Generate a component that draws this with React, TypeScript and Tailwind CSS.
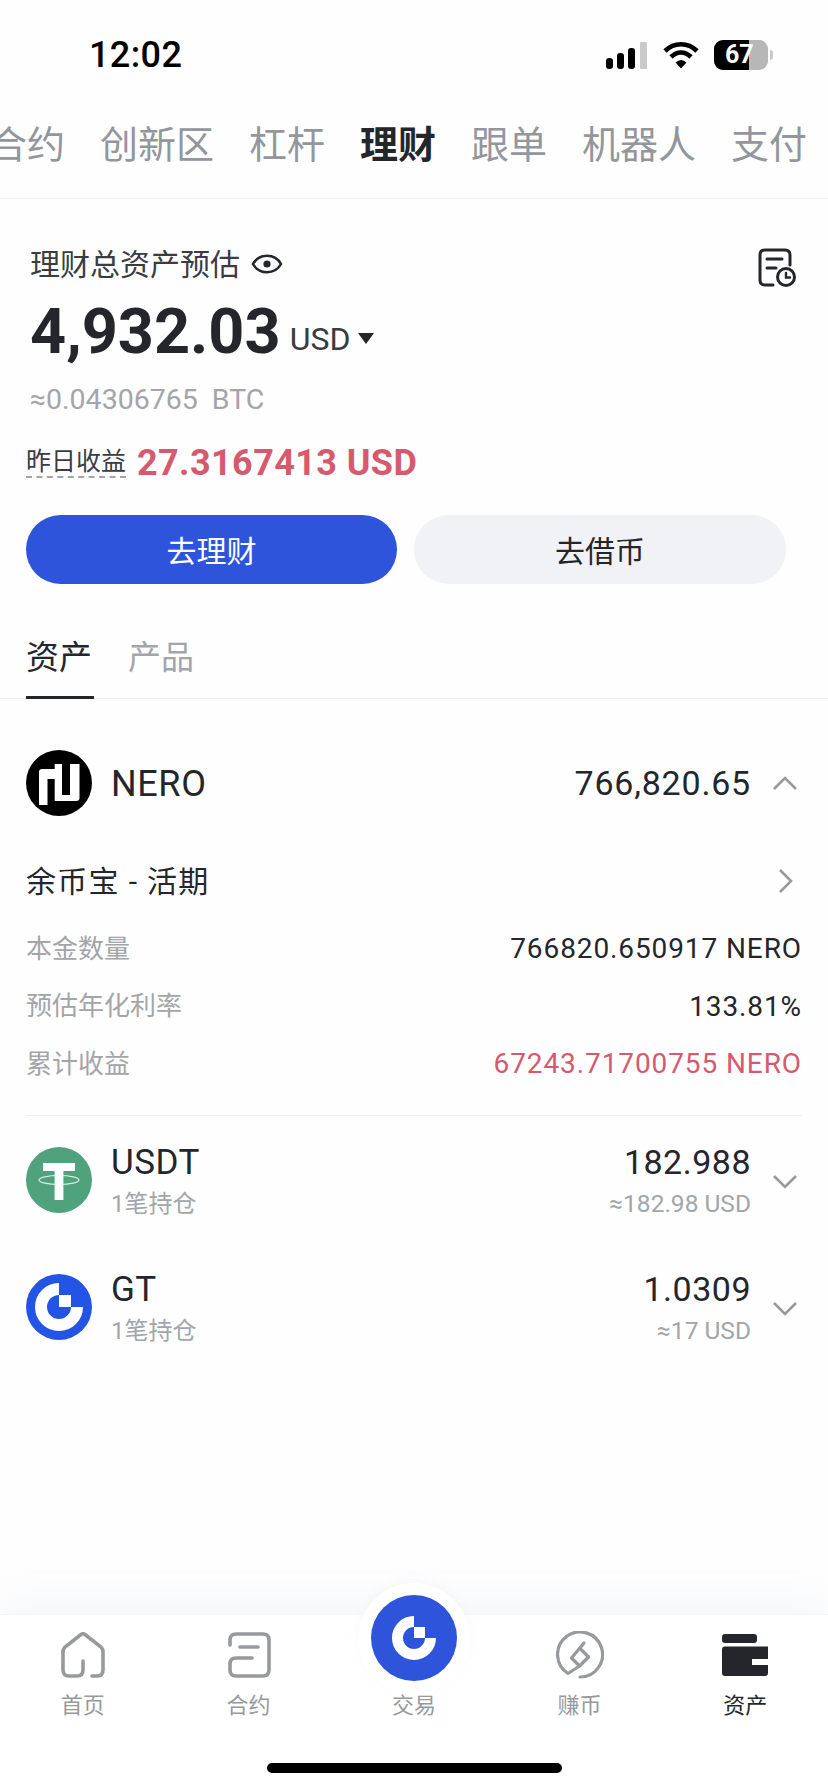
const tabs = ['合约', '创新区', '杠杆', '理财', '跟单', '机器人', '支付'];

const NeroLogo = () => (
  <svg width="66" height="66" viewBox="0 0 66 66" className="shrink-0">
    <circle cx="33" cy="33" r="33" fill="#000" />
    <path
      d="M13 22 Q13 19 16 19 H28.7 V14 H36 V45 H44 V14 H53.5 V48 Q53.5 51 50 51 H28.7 V29 H21.5 V55 H13 Z"
      fill="#fff"
    />
  </svg>
);

const UsdtLogo = () => (
  <svg width="66" height="66" viewBox="0 0 66 66" className="shrink-0">
    <circle cx="33" cy="33" r="33" fill="#50a27d" />
    <path d="M17 16 H49 V24 H37.4 V53 H28.6 V24 H17 Z" fill="#fff" />
    <ellipse cx="33" cy="33" rx="20" ry="4.5" fill="none" stroke="#fff" strokeWidth="1.2" opacity="0.8" />
  </svg>
);

const GateMark = ({ size }: { size: number }) => (
  <svg width={size} height={size} viewBox="0 0 72 72">
    <path d="M36 9 A27 27 0 1 0 63 36" fill="none" stroke="#fff" strokeWidth="18" />
    <rect x="36" y="18" width="18" height="18" fill="#fff" />
  </svg>
);

const ChevronV = ({ up }: { up?: boolean }) => (
  <svg className="ml-[21px] mr-[4px] shrink-0" width="26" height="16" viewBox="0 0 26 16" fill="none" stroke="#97999c" strokeWidth="2.6">
    <path d={up ? 'M2 14 L13 3 L24 14' : 'M2 2 L13 13 L24 2'} />
  </svg>
);

const Row = ({ label, value, red }: { label: string; value: string; red?: boolean }) => (
  <div className="flex h-10 items-center justify-between">
    <span className="pt-[2px] text-[26px] text-[#a3a5a9]">{label}</span>
    <span className={`pt-[2px] text-[28px] tracking-[0.9px] ${red ? 'text-[#d65a6e]' : 'text-[#24262c]'}`}>{value}</span>
  </div>
);

const Coin = ({ logo, name, amount, approx }: { logo: React.ReactNode; name: string; amount: string; approx: string }) => (
  <div className="flex h-20 items-center">
    <div className="mb-[4px] shrink-0">{logo}</div>
    <div className="ml-[19px]">
      <div className="h-10 pt-px text-[35px] leading-10 tracking-[0.5px] text-[#24262c]">{name}</div>
      <div className="mt-1 h-9 text-[24px] leading-9 text-[#a3a5a9]">1笔持仓</div>
    </div>
    <div className="ml-auto text-right">
      <div className="h-10 text-[34px] leading-10 tracking-[0.5px] text-[#24262c]">{amount}</div>
      <div className="mt-1 h-9 text-[24.5px] leading-9 text-[#a3a5a9]">{approx}</div>
    </div>
    <ChevronV />
  </div>
);

const NavItem = ({ icon, label, active }: { icon: React.ReactNode; label: string; active?: boolean }) => (
  <div className="flex flex-col items-center">
    <div className="relative flex h-[50px] w-full items-center justify-center">{icon}</div>
    <div className={`mt-[11px] h-[30px] text-[22px] leading-[30px] ${active ? 'text-[#24262c]' : 'text-[#97999c]'}`}>
      {label}
    </div>
  </div>
);

export default function App() {
  return (
    <div className="flex h-[1792px] w-[828px] flex-col overflow-hidden bg-[#fefefe] font-['Roboto','Noto_Sans_CJK_SC',sans-serif]">
      {/* status bar */}
      <div className="relative h-[100px] shrink-0">
        <div className="absolute left-[89px] top-[32px] text-[36px] font-medium leading-[46px] tracking-[0.4px] text-black">12:02</div>
        <div className="absolute left-[606px] top-[40px] flex items-center">
          <svg width="42" height="28" viewBox="0 0 42 28">
            <rect x="0" y="17" width="7" height="11" rx="3" fill="#000" />
            <rect x="11" y="12" width="7" height="16" rx="3" fill="#000" />
            <rect x="22" y="7" width="7" height="21" rx="3" fill="#000" />
            <rect x="34" y="1" width="7" height="27" rx="1" fill="#c9c9c9" />
          </svg>
          <svg className="ml-[15px]" width="36" height="28" viewBox="0 0 36 28">
            <path d="M2 10 C11 1 25 1 34 10" fill="none" stroke="#000" strokeWidth="4.6" />
            <path d="M8 16 C14 10 22 10 28 16" fill="none" stroke="#000" strokeWidth="4.6" />
            <path d="M12.5 21.5 Q18 16.5 23.5 21.5 L18 27.5 Z" fill="#000" />
          </svg>
          <div className="relative ml-[15px] flex h-[30px] w-[54px] overflow-hidden rounded-[9px] bg-[#b7b7b7]">
            <div className="w-[35px] bg-black" />
            <div className="absolute left-[11px] top-0 text-[25px] font-bold leading-[30px] text-white">67</div>
          </div>
          <div className="ml-[2px] h-[10px] w-[3px] rounded-r-sm bg-[#c9c9c9]" />
        </div>
      </div>

      {/* top tabs */}
      <div className="flex h-[99px] shrink-0 items-start gap-[35px] overflow-hidden border-b border-[#eef0f2] pt-[22px]">
        {tabs.map((t, i) => (
          <span
            key={t}
            className={`shrink-0 text-[38px] leading-[46px] ${i === 0 ? 'ml-[-11px]' : ''} ${
              t === '理财' ? 'font-bold text-[#24262c]' : 'text-[#93969b]'
            }`}
          >
            {t}
          </span>
        ))}
      </div>

      {/* summary */}
      <div className="shrink-0 pl-[26px] pr-[42px] pt-[45px]">
        <div className="flex h-10 items-center pl-[4px]">
          <span className="text-[30px] text-[#3a3c42]">理财总资产预估</span>
          <svg className="ml-[11px]" width="32" height="22" viewBox="0 0 32 22">
            <path d="M2 11 C8 0 24 0 30 11 C24 22 8 22 2 11 Z" fill="none" stroke="#24262c" strokeWidth="2.6" />
            <circle cx="16" cy="11" r="3.6" fill="#24262c" />
          </svg>
          <svg className="ml-auto mr-[-10px] mt-[6px]" width="38" height="39" viewBox="0 0 38 39" fill="none" stroke="#24262c" strokeWidth="3" strokeLinecap="round">
            <path d="M15 37 H7 Q2 37 2 32 V7 Q2 2 7 2 H27 Q32 2 32 7 V17" />
            <path d="M9 11 H24 M9 20 H18" />
            <circle cx="28" cy="29" r="8.5" />
            <path d="M28 25 V29.5 H32" strokeWidth="2.4" />
          </svg>
        </div>
        <div className="mt-[13px] flex h-[70px] items-center pl-[4px] text-[#24262c]">
          <span className="text-[63px] font-bold leading-[70px]">4,932.03</span>
          <span className="ml-[9px] mt-[13px] text-[32px] text-[#3a3c42]">USD</span>
          <span className="ml-[8px] mt-[13px] h-0 w-0 border-x-[8px] border-t-[11px] border-x-transparent border-t-[#24262c]" />
        </div>
        <div className="mt-[13px] h-10 pl-[4px] text-[28.5px] leading-10 text-[#a3a5a9]">≈0.04306765&nbsp;&nbsp;BTC</div>
        <div className="mt-[23px] flex h-10 items-center">
          <span className="border-b-2 border-dashed border-[#a3a5a9] text-[25px] leading-[28px] text-[#3a3c42]">昨日收益</span>
          <span className="ml-[11px] text-[36px] font-bold tracking-[0.4px] text-[#d65a6e]">27.3167413 USD</span>
        </div>
        <div className="mt-[32px] flex gap-[17px]">
          <div className="flex h-[69px] w-[371px] items-center justify-center rounded-full bg-[#2e54dc] pt-[3px] text-[30px] text-white">去理财</div>
          <div className="flex h-[69px] w-[372px] items-center justify-center rounded-full bg-[#f1f2f5] pt-[3px] text-[30px] text-[#24262c]">去借币</div>
        </div>
      </div>

      {/* asset / product tabs */}
      <div className="mt-[44px] flex h-[71px] shrink-0 items-start gap-[34px] border-b border-[#eef0f2] pl-[26px]">
        <div className="-mb-px h-[71px] w-[68px] border-b-[3px] border-[#24262c] pt-[10px] text-[33px] leading-10 text-[#24262c]">资产</div>
        <div className="pt-[10px] text-[33px] leading-10 text-[#a3a5a9]">产品</div>
      </div>

      {/* asset list */}
      <div className="flex-1 px-[26px]">
        <div className="mt-[51px] flex h-[66px] items-center">
          <NeroLogo />
          <span className="ml-[19px] pt-px text-[36px] tracking-[0.6px] text-[#24262c]">NERO</span>
          <span className="ml-auto text-[34px] tracking-[0.8px] text-[#24262c]">766,820.65</span>
          <ChevronV up />
        </div>
        <div className="mt-[45px] flex h-10 items-center justify-between">
          <span className="text-[30px] tracking-[1.3px] text-[#24262c]">余币宝 - 活期</span>
          <svg className="mr-[8px]" width="16" height="26" viewBox="0 0 16 26" fill="none" stroke="#97999c" strokeWidth="2.6">
            <path d="M2 2 L13 13 L2 24" />
          </svg>
        </div>
        <div className="mt-[27px] flex flex-col gap-[17.5px]">
          <Row label="本金数量" value="766820.650917 NERO" />
          <Row label="预估年化利率" value="133.81%" />
          <Row label="累计收益" value="67243.71700755 NERO" red />
        </div>
        <div className="mt-[32px] border-t border-[#f0f1f3]" />
        <div className="mt-[26px] flex flex-col gap-[47px]">
          <Coin logo={<UsdtLogo />} name="USDT" amount="182.988" approx="≈182.98 USD" />
          <Coin
            logo={
              <div className="flex h-[66px] w-[66px] items-center justify-center rounded-full bg-[#2354e6]">
                <GateMark size={48} />
              </div>
            }
            name="GT"
            amount="1.0309"
            approx="≈17 USD"
          />
        </div>
      </div>

      {/* bottom nav */}
      <div className="relative h-[178px] shrink-0 border-t border-[#f5f5f7] bg-white shadow-[0_-18px_30px_rgba(243,244,247,0.55)]">
        <div className="absolute left-[358px] top-[-32px] h-[112px] w-[112px] rounded-full bg-white shadow-[0_-3px_10px_rgba(243,244,247,0.6)]" />
        <div className="relative grid grid-cols-5 pt-[15px]">
          <NavItem
            label="首页"
            icon={
              <svg width="44" height="46" viewBox="0 0 44 46" fill="none" stroke="#97999c" strokeWidth="3.6" strokeLinecap="round">
                <path d="M22 29 V38 Q22 44 16 44 H8 Q2 44 2 38 V20 Q2 17 4 15 L20 2.5 Q22 1 24 2.5 L40 15 Q42 17 42 20 V38 Q42 44 36 44 H31" />
              </svg>
            }
          />
          <NavItem
            label="合约"
            icon={
              <svg className="ml-[2px]" width="43" height="46" viewBox="0 0 43 46" fill="none" stroke="#97999c" strokeWidth="3.6" strokeLinecap="round">
                <path d="M2 13 V8 Q2 2 8 2 H35 Q41 2 41 8 V38 Q41 44 35 44 H8 Q2 44 2 38 V32 Q2 26 8 26 H24" />
                <path d="M12 15 H30" />
              </svg>
            }
          />
          <NavItem
            label="交易"
            icon={
              <div className="absolute left-[40px] top-[-35px] flex h-[86px] w-[86px] items-center justify-center rounded-full bg-[#2e54dc]">
                <GateMark size={44} />
              </div>
            }
          />
          <NavItem
            label="赚币"
            icon={
              <svg width="48" height="48" viewBox="0 0 48 48" fill="none" stroke="#97999c" strokeWidth="3.2" strokeLinecap="round" strokeLinejoin="round">
                <path d="M24 46 A22.5 22.5 0 1 0 12 42.5 L23.5 35 L32.5 26 L25 18.5" />
                <path d="M28 12 L15.5 27 L23.5 35" />
              </svg>
            }
          />
          <NavItem
            active
            label="资产"
            icon={
              <svg width="46" height="42" viewBox="0 0 46 42" fill="#24262c">
                <rect x="0" y="0" width="35" height="9" rx="3" />
                <path d="M3 12.5 H46 V25 H30 V31 H46 V39 Q46 42 43 42 H3 Q0 42 0 39 V15.5 Q0 12.5 3 12.5 Z" />
              </svg>
            }
          />
        </div>
        <div className="mx-auto mt-[42px] h-[10px] w-[295px] rounded-full bg-black" />
      </div>
    </div>
  );
}
